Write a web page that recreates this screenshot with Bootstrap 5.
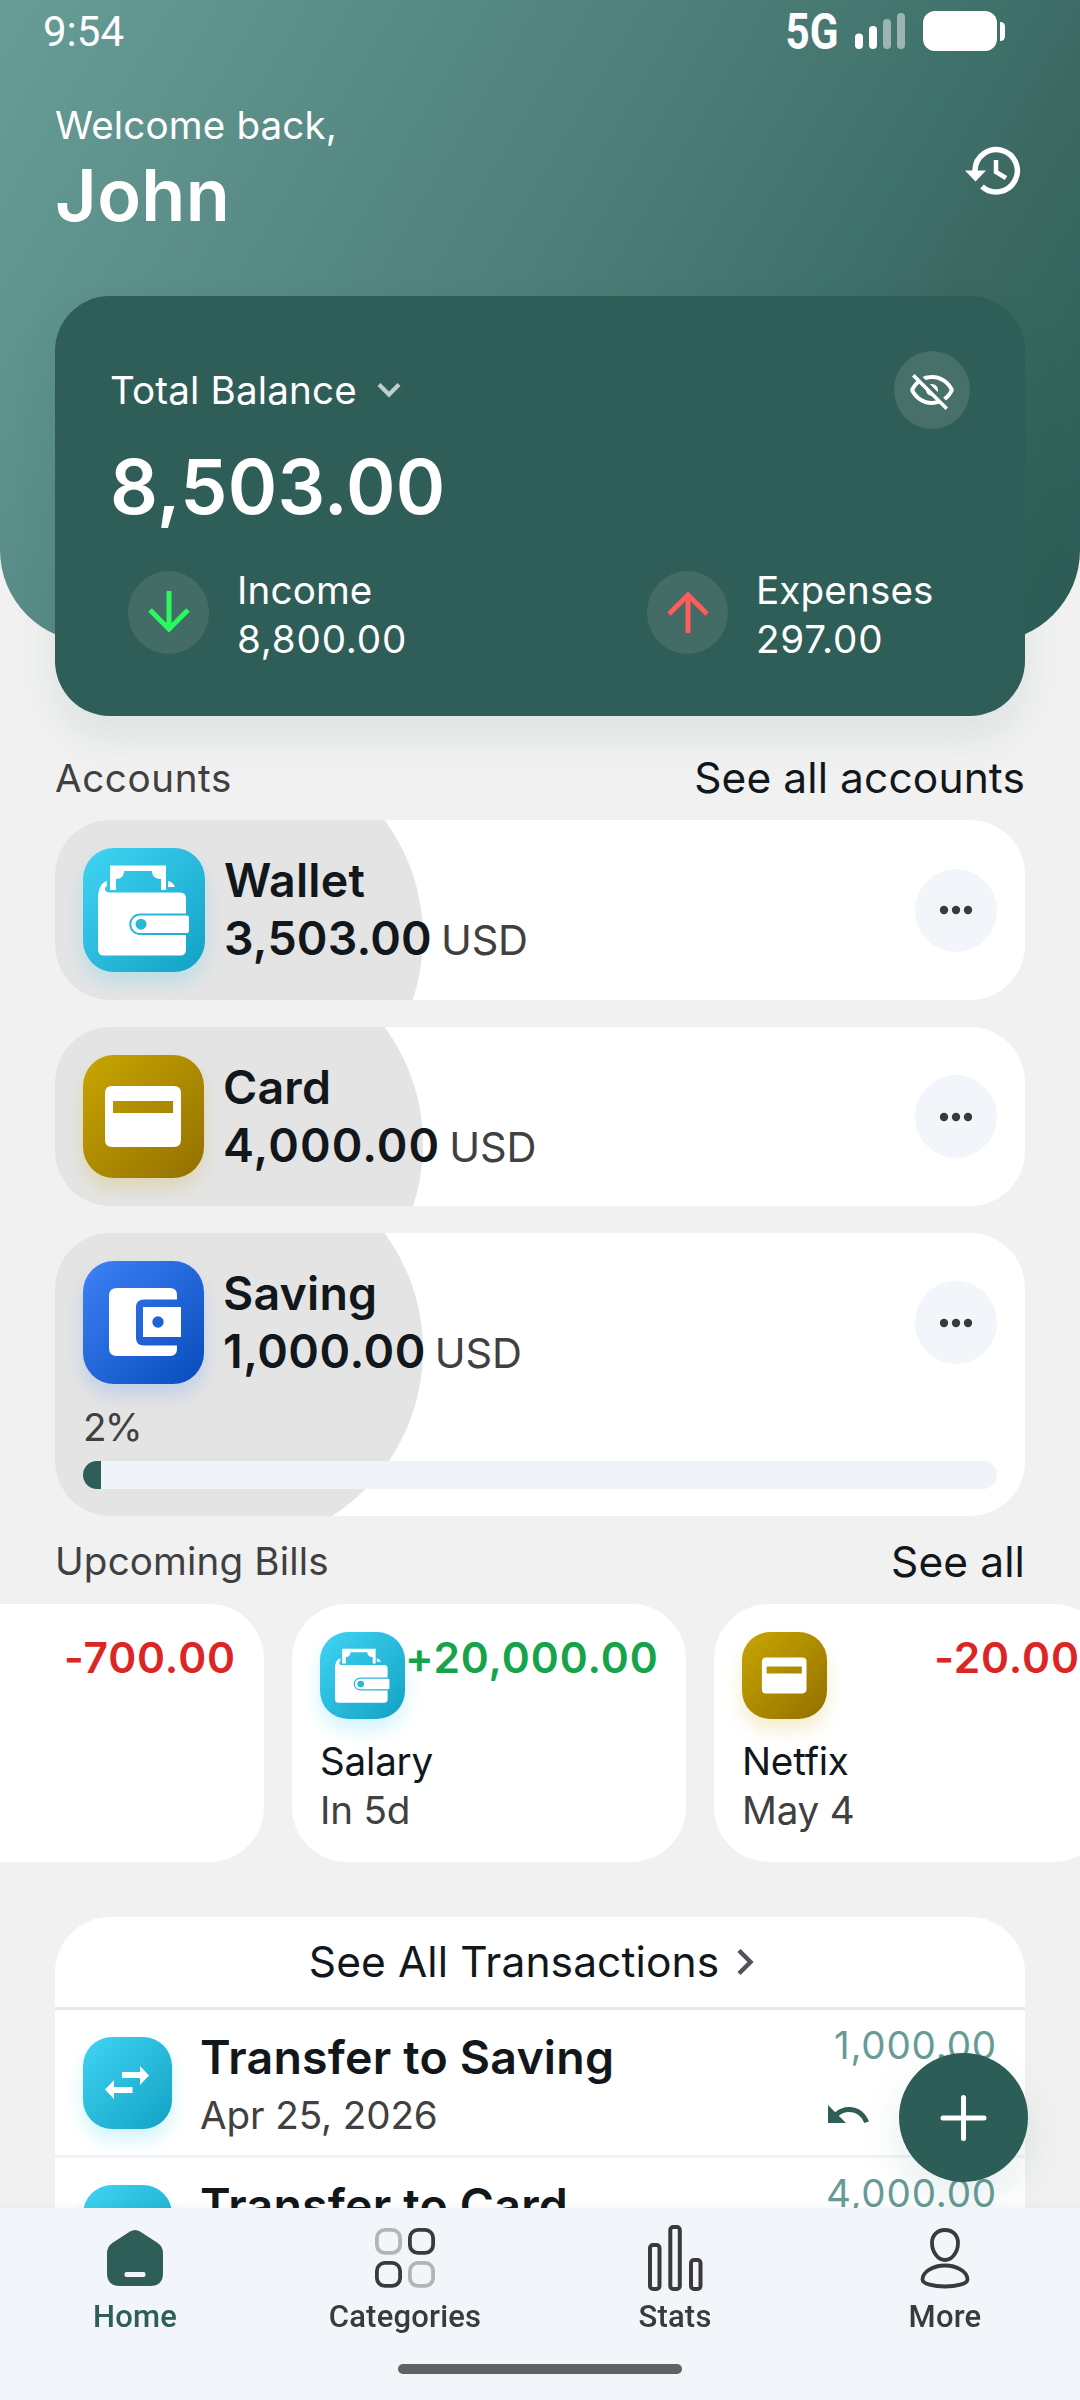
<!DOCTYPE html>
<html lang="en">
<head>
<meta charset="utf-8">
<meta name="viewport" content="width=device-width, initial-scale=1">
<title>Wallet home</title>
<link href="https://cdn.jsdelivr.net/npm/bootstrap@5.3.0/dist/css/bootstrap.min.css" rel="stylesheet">
<style>
  :root { --brand: #2f5d57; --ink: #12171c; --soft: #404040; }
  body { font-family: Inter, "Liberation Sans", sans-serif; background: #f1f1f1; color: var(--ink); height: 2400px; overflow: hidden; }
  svg { display: block; flex: none; }
  .t-label { font-size: 38.6px; line-height: 48.5px; letter-spacing: .15px; white-space: nowrap; }
  .t-num { letter-spacing: .8px; }
  .t-link { font-size: 42.5px; line-height: 50px; letter-spacing: .1px; white-space: nowrap; }
  .t-title { font-size: 46.5px; line-height: 58px; font-weight: 600; letter-spacing: .2px; white-space: nowrap; }
  .t-title .t-num { letter-spacing: 1.1px; }
  .soft { color: var(--soft); }
  .gut { padding-left: 55px; padding-right: 55px; }

  .hero { height: 642px; border-radius: 0 0 92px 92px; color: #fff;
    background: linear-gradient(120.7deg, #679c97 0%, #4f807a 46%, #3f716b 69%, #3d6862 77%, #34675f 84%, #2d5d56 96%); }
  .statusbar { height: 62px; padding: 0 75px 0 43px; font-family: Roboto, sans-serif; }
  .clock { font-size: 42px; line-height: 62px; padding-top: 1px; }
  .greet { padding-top: 39px; }
  .greet-name { font-size: 72px; line-height: 89px; font-weight: 600; letter-spacing: .4px; }
  .balance { margin-top: -346px; background: var(--brand); border-radius: 55px; padding: 55px 55px 53px; color: #fff;
    box-shadow: 0 22px 44px rgba(47, 93, 87, .09); position: relative; }
  .eye { width: 76px; height: 78px; background: #47706b; }
  .chev { margin-left: 20px; }
  .total { font-size: 75px; line-height: 91px; font-weight: 600; margin: 12px 0 34px; letter-spacing: .3px; }
  .flows { padding-left: 18px; }
  .flow-item { gap: 28px; }
  .flow-item:first-child { width: 519px; }
  .disc { width: 81px; height: 83px; background: #446c67; margin-top: -5px; }

  .sec-head { height: 104px; padding-top: 20px; }
  .sec-head.bills { height: 88px; padding-top: 3px; }
  .acct { background: #fff; border-radius: 55px; padding: 28px; position: relative; overflow: hidden; }
  .acct.with-goal { padding-bottom: 27px; }
  .acct::before { content: ""; position: absolute; left: -100px; top: -80px; width: 467.5px; height: 394px; border-radius: 0 197px 197px 0; background: #e4e4e4; }
  .acct > * { position: relative; }
  .acct-stack { gap: 27px; }
  .tile { width: 121px; height: 123px; border-radius: 31px; flex: none; display: flex; align-items: center; justify-content: center; }
  .tile.wide { width: 122px; height: 124px; }
  .cyan { background: linear-gradient(135deg, #40d4f4, #12a1c4); box-shadow: 0 11px 18px rgba(34, 200, 240, .2); }
  .gold { background: linear-gradient(135deg, #c8a600, #937000); box-shadow: 0 11px 18px rgba(200, 166, 0, .2); }
  .blue { background: linear-gradient(135deg, #3d82f6, #084bbd); box-shadow: 0 11px 18px rgba(60, 130, 246, .2); }
  .acct-body { margin-left: 19px; }
  .unit { font-size: 41.5px; font-weight: 400; color: var(--soft); margin-left: 9px; letter-spacing: -.2px; }
  .dots { width: 82px; height: 83px; background: #f2f5fa; }
  .goal { line-height: 48px; margin: 19px 0 10px; letter-spacing: -1.8px; }
  .goal-bar { height: 28px; border-radius: 14px; background: #f0f3f8; }
  .goal-bar .progress-bar { background: var(--brand); }

  .bill-row { gap: 28px; margin-left: -130px; }
  .bill { width: 394px; height: 258px; border-radius: 55px; background: #fff; padding: 28px; flex: none; }
  .bill .tile { width: 85px; height: 87px; border-radius: 28px; }
  .bill-amt { font-size: 42.5px; line-height: 51px; font-weight: 600; letter-spacing: .9px; }
  .pos { color: #16a34a; } .neg { color: #dc2626; }
  .bill-text { margin-top: 18px; letter-spacing: -.2px; }

  .tx { margin-top: 55px; background: #fff; border-radius: 55px 55px 0 0; }
  .tx-head { height: 93px; border-bottom: 3px solid #e5e8eb; gap: 18px; }
  .tx-row { height: 148px; padding: 27px 28px; border-bottom: 3px solid #f0f4f8; }
  .tx-row .tile { width: 89px; height: 92px; border-radius: 29px; }
  .tx-text { margin: -9px 0 0 28px; }
  .tx-date { line-height: 58px; letter-spacing: -.1px; }
  .tx-side { margin-top: -16px; color: #679b95; }
  .tx-undo { margin: 21px 125px 0 0; }

  .fab { right: 52px; top: 2053px; width: 129px; height: 129px; background: #2d5d57; box-shadow: 0 18px 44px rgba(47, 93, 87, .11); z-index: 5; }
  .tabs { height: 192px; background: #f2f5fa; font-family: Roboto, sans-serif; padding-top: 14px; z-index: 6; box-shadow: 0 -2px 8px rgba(0,0,0,.04); }
  .tab-text { font-size: 31px; line-height: 42px; margin-top: 2px; font-weight: 500; letter-spacing: .2px; color: #3a3a3a; }
  .tab-text.on { color: var(--brand); }
  .grip { width: 284px; height: 10px; border-radius: 5px; background: #5f6163; margin-top: 26px; }
</style>
<script src="https://cdn.jsdelivr.net/npm/bootstrap@5.3.0/dist/js/bootstrap.bundle.min.js"></script>
</head>
<body>
<svg width="0" height="0" class="position-absolute">
  <symbol id="i-wallet" viewBox="0 0 122 124">
    <path fill="#fff" fill-rule="evenodd" d="M27 17.500H83V42H78V31C72 31 69 28 69 23H41C41 28 38 31 33 31V42H27Z"/>
    <path fill="#fff" d="M24 33V38C21 39 21 44.500 27 44.500H97Q103 44.500 103 50.500V65.500H57A10.500 10.500 0 0 0 57 87H103V101.500Q103 107.500 97 107.500H21Q15 107.500 15 101.500V50C15 42 18 34 24 33ZM85 33Q90 34 92 39H85Z"/>
    <path fill="#fff" fill-rule="evenodd" d="M57 67.500H104Q106 67.500 106 69.500V83Q106 85 104 85H57A8.750 8.750 0 0 1 57 67.500ZM58 70.700A5.500 5.500 0 1 0 58 81.700A5.500 5.500 0 1 0 58 70.700Z"/>
  </symbol>
  <symbol id="i-card" viewBox="0 0 121 123">
    <path fill="#fff" fill-rule="evenodd" d="M29 31H91Q98 31 98 38V85Q98 92 91 92H29Q22 92 22 85V38Q22 31 29 31ZM30 46V58H90V46Z"/>
  </symbol>
  <symbol id="i-save" viewBox="0 0 121 123">
    <path fill="#fff" d="M34 27H87Q94 27 94 34V38.500H61Q53 38.500 53 46V77Q53 84.500 61 84.500H94V88Q94 95 87 95H34Q26 95 26 87V35Q26 27 34 27Z"/>
    <path fill="#fff" fill-rule="evenodd" d="M60 46H98V76H60ZM75 55.300A5.700 5.700 0 1 0 75 66.700A5.700 5.700 0 1 0 75 55.300Z"/>
  </symbol>
  <symbol id="i-swap" viewBox="0 0 89 92">
    <path fill="#fff" d="M39 35H57V29L66 38.500L57 48V41H39ZM49.500 50V56H31V62L22 52.500L31 43V50Z"/>
  </symbol>
  <symbol id="i-dots" viewBox="0 0 34 10">
    <g fill="#3a3a3a"><circle cx="5" cy="5" r="4.200"/><circle cx="17" cy="5" r="4.200"/><circle cx="29" cy="5" r="4.200"/></g>
  </symbol>
  <symbol id="i-undo" viewBox="0 0 24 24">
    <path fill="#2f5d57" d="M12.500,8C9.850,8 7.450,9 5.600,10.600L2,7V16H11L7.380,12.380C8.770,11.220 10.540,10.500 12.500,10.500C16.040,10.500 19.050,12.810 20.100,16L22.470,15.220C21.080,11.030 17.150,8 12.500,8Z"/>
  </symbol>
</svg>

<header class="hero">
  <div class="statusbar d-flex justify-content-between align-items-center">
    <span class="clock">9:54</span>
    <svg width="220" height="62" viewBox="0 0 220 62">
      <text x="0.500" y="49" font-family="Roboto" font-weight="700" font-size="50" fill="#fff" textLength="53" lengthAdjust="spacingAndGlyphs">5G</text>
      <g fill="#fff"><rect x="70" y="33.500" width="8" height="15.500" rx="4"/><rect x="84" y="26" width="8" height="23" rx="4"/>
      <rect x="98" y="19" width="8" height="30" rx="4" opacity=".47"/><rect x="112" y="13" width="8" height="36" rx="4" opacity=".47"/>
      <rect x="138" y="11" width="74" height="40" rx="12"/><path d="M215 22Q220 22 220 27V36Q220 41 215 41Z"/></g>
    </svg>
  </div>
  <div class="greet gut d-flex justify-content-between align-items-center">
    <div>
      <div class="t-label">Welcome back,</div>
      <div class="greet-name">John</div>
    </div>
    <svg width="60" height="60" viewBox="0 0 60 60" fill="none" stroke="#fff" stroke-width="5.500">
      <path d="M10 32V30A21.200 21.200 0 1 1 17 46.500"/><path d="M31 20V32L41 38" stroke-width="4.500"/>
      <path d="M0 30.500H21L10.500 41.500Z" fill="#fff" stroke="none"/>
    </svg>
  </div>
</header>

<main class="gut">
  <section class="balance">
    <div class="d-flex justify-content-between align-items-center">
      <div class="d-flex align-items-center">
        <span class="t-label">Total Balance</span>
        <svg class="chev" width="24" height="16" viewBox="0 0 24 16"><path d="M2 2.500L12 12.500L22 2.500" fill="none" stroke="#c0cecd" stroke-width="4.200"/></svg>
      </div>
      <div class="eye rounded-circle d-flex align-items-center justify-content-center">
        <svg width="48" height="48" viewBox="0 0 24 24" fill="#fff"><path d="M2,5.270L3.280,4L20,20.720L18.730,22L15.650,18.920C14.500,19.300 13.280,19.500 12,19.500C7,19.500 2.730,16.390 1,12C1.690,10.240 2.790,8.690 4.190,7.460L2,5.270M12,9A3,3 0 0,1 15,12C15,12.350 14.940,12.690 14.830,13L11,9.170C11.310,9.060 11.650,9 12,9M12,4.500C17,4.500 21.270,7.610 23,12C22.180,14.080 20.790,15.880 19,17.190L17.580,15.760C18.940,14.820 20.060,13.540 20.820,12C19.170,8.640 15.760,6.500 12,6.500C10.910,6.500 9.840,6.680 8.840,7L7.300,5.470C8.740,4.850 10.330,4.500 12,4.500M3.180,12C4.830,15.360 8.240,17.500 12,17.500C12.690,17.500 13.370,17.430 14,17.290L11.720,15C10.290,14.850 9.150,13.710 9,12.280L5.600,8.870C4.610,9.720 3.780,10.780 3.180,12Z"/></svg>
      </div>
    </div>
    <div class="total">8,503.00</div>
    <div class="flows d-flex">
      <div class="flow-item d-flex align-items-center">
        <div class="disc rounded-circle d-flex align-items-center justify-content-center">
          <svg width="44" height="44" viewBox="0 0 44 44" fill="none" stroke="#29fa60" stroke-width="5"><path d="M22 1V40M3 20L22 39L41 20"/></svg>
        </div>
        <div class="t-label"><div>Income</div><div class="t-num">8,800.00</div></div>
      </div>
      <div class="flow-item d-flex align-items-center">
        <div class="disc rounded-circle d-flex align-items-center justify-content-center">
          <svg width="44" height="44" viewBox="0 0 44 44" fill="none" stroke="#ff5c5c" stroke-width="5"><path d="M22 43V4M3 24L22 5L41 24"/></svg>
        </div>
        <div class="t-label"><div>Expenses</div><div class="t-num">297.00</div></div>
      </div>
    </div>
  </section>

  <div class="sec-head d-flex justify-content-between align-items-center">
    <span class="t-label soft" style="letter-spacing:.6px">Accounts</span><span class="t-link">See all accounts</span>
  </div>

  <section class="acct-stack d-flex flex-column">
    <article class="acct">
      <div class="d-flex align-items-center">
        <div class="tile wide cyan"><svg width="122" height="124"><use href="#i-wallet"/></svg></div>
        <div class="acct-body t-title"><div>Wallet</div><div>3,503.00<span class="unit">USD</span></div></div>
        <div class="dots rounded-circle ms-auto d-flex align-items-center justify-content-center"><svg width="34" height="10"><use href="#i-dots"/></svg></div>
      </div>
    </article>
    <article class="acct">
      <div class="d-flex align-items-center">
        <div class="tile gold"><svg width="121" height="123"><use href="#i-card"/></svg></div>
        <div class="acct-body t-title"><div>Card</div><div class="t-num">4,000.00<span class="unit">USD</span></div></div>
        <div class="dots rounded-circle ms-auto d-flex align-items-center justify-content-center"><svg width="34" height="10"><use href="#i-dots"/></svg></div>
      </div>
    </article>
    <article class="acct with-goal">
      <div class="d-flex align-items-center">
        <div class="tile blue"><svg width="121" height="123"><use href="#i-save"/></svg></div>
        <div class="acct-body t-title"><div>Saving</div><div style="letter-spacing:.5px">1,000.00<span class="unit">USD</span></div></div>
        <div class="dots rounded-circle ms-auto d-flex align-items-center justify-content-center"><svg width="34" height="10"><use href="#i-dots"/></svg></div>
      </div>
      <div class="t-label soft goal">2%</div>
      <div class="progress goal-bar"><div class="progress-bar" style="width:2%"></div></div>
    </article>
  </section>

  <div class="sec-head bills d-flex justify-content-between align-items-center">
    <span class="t-label soft">Upcoming Bills</span><span class="t-link">See all</span>
  </div>
</main>

<section class="bill-row d-flex">
  <article class="bill">
    <div class="d-flex justify-content-end"><span class="bill-amt neg">-700.00</span></div>
  </article>
  <article class="bill">
    <div class="d-flex justify-content-between align-items-start">
      <div class="tile cyan"><svg width="73" height="75"><use href="#i-wallet"/></svg></div><span class="bill-amt pos">+20,000.00</span>
    </div>
    <div class="bill-text t-label"><div>Salary</div><div class="soft">In 5d</div></div>
  </article>
  <article class="bill">
    <div class="d-flex justify-content-between align-items-start">
      <div class="tile gold"><svg width="71" height="73"><use href="#i-card"/></svg></div><span class="bill-amt neg">-20.00</span>
    </div>
    <div class="bill-text t-label"><div>Netfix</div><div class="soft">May 4</div></div>
  </article>
</section>

<div class="gut">
  <section class="tx">
    <div class="tx-head d-flex align-items-center justify-content-center">
      <span class="t-link">See All Transactions</span>
      <svg width="34" height="28" viewBox="0 0 34 28"><path d="M2 2.500L13.500 14L2 25.500" fill="none" stroke="#50545a" stroke-width="4.500"/></svg>
    </div>
    <div class="tx-row d-flex align-items-start">
      <div class="tile cyan"><svg width="89" height="92"><use href="#i-swap"/></svg></div>
      <div class="tx-text"><div class="t-title">Transfer to Saving</div><div class="t-label soft tx-date">Apr 25, 2026</div></div>
      <div class="tx-side ms-auto d-flex flex-column align-items-end"><span class="t-label t-num">1,000.00</span><svg class="tx-undo" width="48" height="48"><use href="#i-undo"/></svg></div>
    </div>
    <div class="tx-row d-flex align-items-start">
      <div class="tile cyan"><svg width="89" height="92"><use href="#i-swap"/></svg></div>
      <div class="tx-text"><div class="t-title">Transfer to Card</div><div class="t-label soft tx-date">Apr 25, 2026</div></div>
      <div class="tx-side ms-auto d-flex flex-column align-items-end"><span class="t-label t-num">4,000.00</span><svg class="tx-undo" width="48" height="48"><use href="#i-undo"/></svg></div>
    </div>
  </section>
</div>

<div class="fab rounded-circle position-absolute d-flex align-items-center justify-content-center">
  <svg width="48" height="48" viewBox="0 0 48 48"><path d="M23.500 3.500V44.500M3 24H44" stroke="#fff" stroke-width="5" stroke-linecap="round"/></svg>
</div>

<nav class="tabs fixed-bottom">
  <div class="row g-0 text-center">
    <div class="col d-flex flex-column align-items-center">
      <svg width="72" height="72" viewBox="0 0 72 72"><path fill="#2f5d57" d="M31 9.500Q36 6.500 41 9.500L58 20.500Q64 24.500 64 31V51Q64 64 51 64H21Q8 64 8 51V31Q8 24.500 14 20.500Z"/><rect x="25.500" y="50" width="21" height="5" rx="2" fill="#f2f5fa"/></svg>
      <span class="tab-text on">Home</span>
    </div>
    <div class="col d-flex flex-column align-items-center">
      <svg width="72" height="72" viewBox="0 0 72 72" fill="none" stroke="#3a3a3a" stroke-width="3.800"><rect x="7.900" y="7.900" width="23.200" height="23" rx="8" stroke="#b4b4b4"/><rect x="40.900" y="7.900" width="23.200" height="23" rx="8"/><rect x="7.900" y="40.900" width="23.200" height="23" rx="8"/><rect x="40.900" y="40.900" width="23.200" height="23" rx="8" stroke="#b4b4b4"/></svg>
      <span class="tab-text">Categories</span>
    </div>
    <div class="col d-flex flex-column align-items-center">
      <svg width="72" height="72" viewBox="0 0 72 72" fill="none" stroke="#3a3a3a" stroke-width="4"><rect x="11" y="23" width="9.500" height="44" rx="3"/><rect x="31.300" y="5" width="9.500" height="62" rx="3"/><rect x="52" y="38" width="9.500" height="29" rx="3"/></svg>
      <span class="tab-text">Stats</span>
    </div>
    <div class="col d-flex flex-column align-items-center">
      <svg width="72" height="72" viewBox="0 0 72 72" fill="none" stroke="#3a3a3a" stroke-width="3.800"><path d="M36 8C44 8 49 13.500 49 21C49 30 43 38 36 38C29 38 23 30 23 21C23 13.500 28 8 36 8Z"/><path d="M36 43.500C48 43.500 58.500 50 58.500 57.500C58.500 62 47 64.500 36 64.500C25 64.500 13.500 62 13.500 57.500C13.500 50 24 43.500 36 43.500Z"/></svg>
      <span class="tab-text">More</span>
    </div>
  </div>
  <div class="grip mx-auto"></div>
</nav>
</body>
</html>
